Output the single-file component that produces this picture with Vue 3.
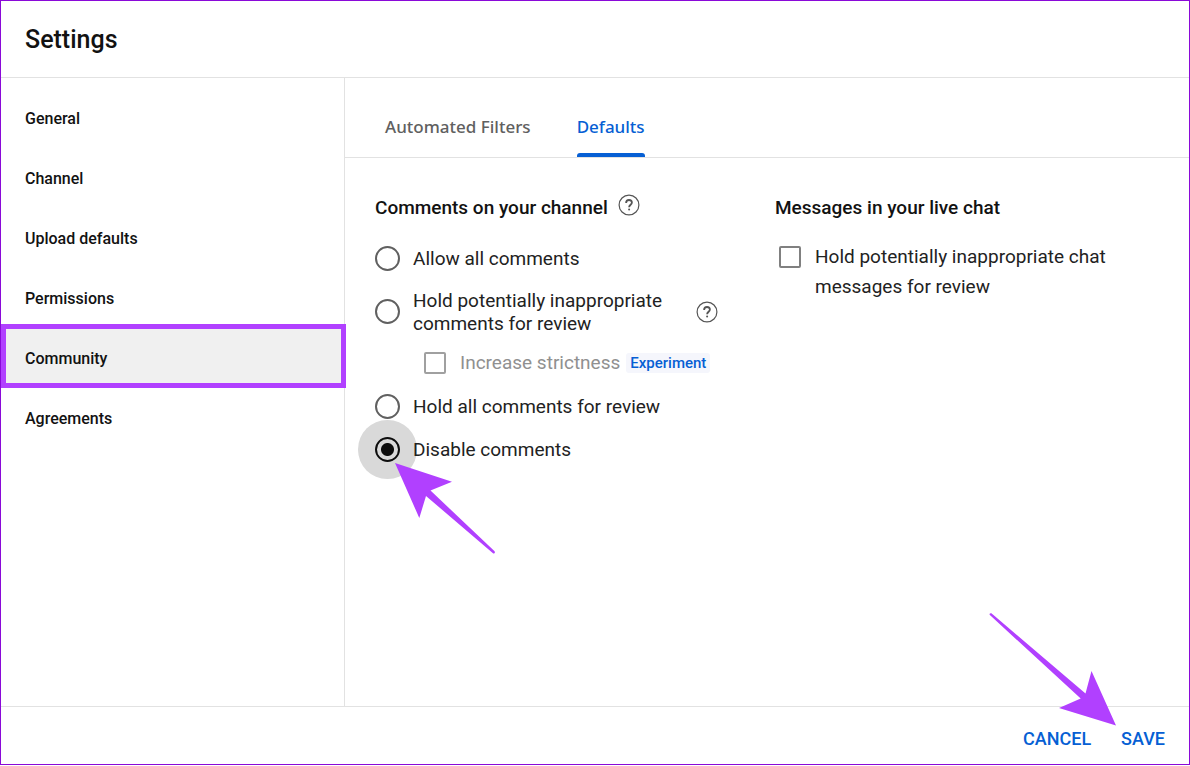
<script setup>
import { ref } from 'vue'

const sections = ['General', 'Channel', 'Upload defaults', 'Permissions', 'Community', 'Agreements']
const current = ref('Community')
const tabs = ['Automated Filters', 'Defaults']
const tab = ref('Defaults')
const mode = ref('disable')
const strict = ref(false)
const holdChat = ref(false)
</script>

<template>
  <div class="dialog">
    <header class="header">
      <h1>Settings</h1>
    </header>

    <div class="body">
      <nav class="sidebar">
        <button
          v-for="s in sections"
          :key="s"
          type="button"
          class="section"
          :class="{ active: s === current }"
          @click="current = s"
        >{{ s }}</button>
      </nav>

      <main class="main">
        <div class="tabs" role="tablist">
          <button
            v-for="t in tabs"
            :key="t"
            type="button"
            role="tab"
            class="tab"
            :class="{ selected: t === tab }"
            :aria-selected="t === tab"
            @click="tab = t"
          >{{ t }}</button>
        </div>

        <div class="columns">
          <section class="comments">
            <div class="title-row">
              <h2>Comments on your channel</h2>
              <button type="button" class="help raised" aria-label="Help with comments">
                <svg viewBox="0 0 22 22" width="22" height="22">
                  <circle cx="11" cy="11" r="9.9" />
                  <path class="mark" d="M8.1 8.9C8.1 7 9.3 6 11 6s2.9 1 2.9 2.6c0 2-2.8 2.3-2.8 4.6" />
                  <circle class="dot" cx="11.1" cy="15.6" r="1" />
                </svg>
              </button>
            </div>

            <div class="options">
              <div class="option">
                <input id="allow" v-model="mode" type="radio" name="mode" value="allow" />
                <label for="allow">Allow all comments</label>
              </div>
              <div class="option tall">
                <input id="hold-some" v-model="mode" type="radio" name="mode" value="hold-some" />
                <label for="hold-some">Hold potentially inappropriate comments for review</label>
                <button type="button" class="help" aria-label="Help with held comments">
                  <svg viewBox="0 0 22 22" width="22" height="22">
                    <circle cx="11" cy="11" r="9.9" />
                    <path class="mark" d="M8.1 8.9C8.1 7 9.3 6 11 6s2.9 1 2.9 2.6c0 2-2.8 2.3-2.8 4.6" />
                    <circle class="dot" cx="11.1" cy="15.6" r="1" />
                  </svg>
                </button>
              </div>
              <div class="option nested">
                <input id="strict" v-model="strict" type="checkbox" disabled />
                <label for="strict">Increase strictness</label>
                <span class="badge">Experiment</span>
              </div>
              <div class="option">
                <input id="hold-all" v-model="mode" type="radio" name="mode" value="hold-all" />
                <label for="hold-all">Hold all comments for review</label>
              </div>
              <div class="option">
                <input id="disable" v-model="mode" type="radio" name="mode" value="disable" />
                <label for="disable">Disable comments</label>
                <svg class="arrow arrow-radio" viewBox="0 0 102 92" width="102" height="92" aria-hidden="true">
                  <path d="M0 0L57 18.7L35.5 27.5L99.6 88.3Q100.6 90.6 98.3 90.4L31 33L24.3 55Z" />
                </svg>
              </div>
            </div>
          </section>

          <section class="chat">
            <div class="title-row">
              <h2>Messages in your live chat</h2>
            </div>
            <div class="chat-option">
              <input id="hold-chat" v-model="holdChat" type="checkbox" />
              <label for="hold-chat">Hold potentially inappropriate chat messages for review</label>
            </div>
          </section>
        </div>
      </main>
    </div>

    <footer class="footer">
      <button type="button" class="action">CANCEL</button>
      <button type="button" class="action">SAVE</button>
      <svg class="arrow arrow-save" viewBox="0 0 128 114" width="128" height="114" aria-hidden="true">
        <path d="M127 113.4L102.5 59L96.5 81.5L2.4 1.2Q0.3 0.8 0.6 2.8L91.7 86.5L70 96Z" />
      </svg>
    </footer>
  </div>
</template>

<style>
html,
body {
  background: #fff;
}
</style>

<style scoped>
.dialog {
  box-sizing: border-box;
  display: flex;
  flex-direction: column;
  min-height: calc(100vh - 1px);
  border: 1px solid #8a09d8;
  background: #fff;
  color: #121212;
  font-family: Roboto, "Liberation Sans", sans-serif;
  font-size: 19px;
}

button {
  margin: 0;
  padding: 0;
  border: 0;
  background: none;
  color: inherit;
  font: inherit;
  cursor: pointer;
}

h1,
h2 {
  margin: 0;
  font-weight: 480;
}

.header {
  display: flex;
  align-items: center;
  height: 76px;
  padding: 0 24px;
  border-bottom: 1px solid #e2e2e2;
}

h1 {
  padding-top: 2px;
  font-size: 25px;
  line-height: 32px;
}

.body {
  display: flex;
  flex: 1;
}

.sidebar {
  box-sizing: border-box;
  flex: 0 0 344px;
  display: flex;
  flex-direction: column;
  padding-top: 10px;
  border-right: 1px solid #e2e2e2;
}

.section {
  position: relative;
  height: 60px;
  padding: 0 24px;
  font-size: 16px;
  font-weight: 480;
  text-align: left;
}

.section.active {
  background: #f0f0f0;
}

.section.active::after {
  content: "";
  position: absolute;
  inset: -4px -2px 0 0;
  border: 5px solid #b140ff;
}

.main {
  flex: 1;
  min-width: 0;
}

.tabs {
  display: flex;
  gap: 46px;
  height: 79px;
  padding-left: 40px;
  border-bottom: 1px solid #e2e2e2;
}

.tab {
  position: relative;
  padding-top: 18px;
  color: #606060;
  font-family: "Noto Sans", "Open Sans", sans-serif;
  font-size: 17px;
  font-weight: 500;
}

.tab.selected {
  color: #065fd4;
}

.tab.selected::after {
  content: "";
  position: absolute;
  right: 0;
  bottom: 0;
  left: 0;
  height: 4px;
  border-radius: 3px 3px 0 0;
  background: #065fd4;
}

.columns {
  display: flex;
  gap: 57px;
  padding: 34px 30px 0;
}

.comments {
  flex: 0 0 343px;
}

.chat {
  flex: 0 1 340px;
}

.title-row {
  display: flex;
  align-items: center;
  gap: 10px;
  height: 30px;
}

h2 {
  font-size: 19px;
}

.help {
  width: 22px;
  height: 22px;
  margin: 2px 0 0 auto;
}

.help.raised {
  margin: 0 0 4px;
}

.help svg {
  display: block;
  fill: none;
  stroke: #555;
  stroke-width: 1.2;
}

.help .mark {
  stroke-width: 1.8;
}

.help .dot {
  fill: #555;
  stroke: none;
}

.options {
  margin-top: 15px;
}

.option {
  box-sizing: border-box;
  position: relative;
  display: flex;
  align-items: center;
  height: 43px;
  line-height: 23px;
}

.option label,
.chat-option label {
  color: #222;
  font-weight: 370;
}

.option.tall {
  height: 62px;
}

.option.tall label {
  width: 260px;
  padding-top: 2px;
}

.option.nested {
  padding: 0 0 2px 49px;
}

.option.nested label {
  margin-left: 14px;
  color: #909090;
}

input {
  box-sizing: border-box;
  flex: none;
  margin: 0;
  appearance: none;
  background: transparent;
}

input[type="radio"] {
  width: 25px;
  height: 25px;
  margin-right: 13px;
  border: 2px solid #606060;
  border-radius: 50%;
}

input[type="radio"]:checked {
  border-color: #0d0d0d;
  background: radial-gradient(circle, #0d0d0d 6px, #d9d9d9 7px);
  box-shadow: 0 0 0 17px #d9d9d9;
}

input[type="radio"]:checked + label {
  position: relative;
}

input[type="checkbox"] {
  width: 22px;
  height: 22px;
  border: 2px solid #808080;
  border-radius: 2px;
}

input[type="checkbox"]:disabled {
  border-color: #a0a0a0;
}

.badge {
  margin-left: 6px;
  padding: 0 4px;
  border-radius: 3px;
  background: #f5f6fc;
  color: #065fd4;
  font-size: 15px;
  font-weight: 500;
  line-height: 20px;
}

.chat-option {
  display: flex;
  align-items: flex-start;
  padding: 20px 0 0 4px;
  line-height: 30px;
}

.chat-option input {
  margin: 4px 14px 0 0;
}

.footer {
  position: relative;
  display: flex;
  align-items: center;
  justify-content: flex-end;
  gap: 30px;
  height: 57px;
  padding: 0 24px;
  border-top: 1px solid #e2e2e2;
}

.action {
  padding-top: 6px;
  color: #065fd4;
  font-size: 18px;
  font-weight: 480;
}

.arrow {
  position: absolute;
  fill: #b140ff;
  pointer-events: none;
}

.arrow-radio {
  top: 35px;
  left: 20px;
}

.arrow-save {
  top: -95px;
  right: 72px;
}
</style>
